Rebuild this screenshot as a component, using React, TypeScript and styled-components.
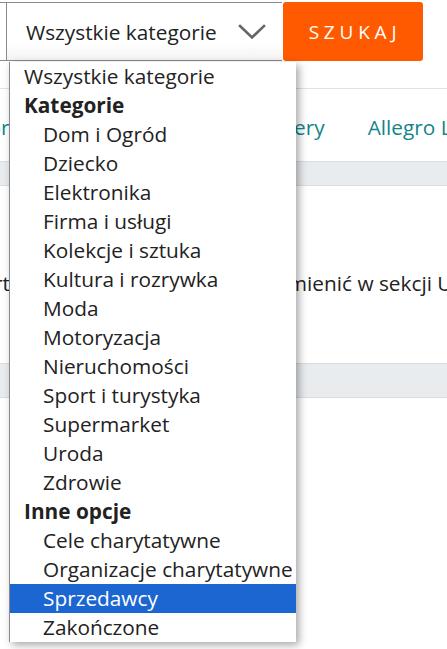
import React from "react";
import styled, { createGlobalStyle } from "styled-components";

const Global = createGlobalStyle`
  html, body { margin: 0; padding: 0; background: #fff; }
  body { font-family: "Open Sans", "Noto Sans", sans-serif; color: #222; overflow: hidden; }
`;

const Page = styled.div`
  position: relative;
  width: 447px;
  height: 649px;
  overflow: hidden;
`;

const Header = styled.div`
  display: flex;
  align-items: stretch;
  padding-top: 2px;
  height: 59px;
`;

const InputStub = styled.div`
  width: 6px;
  border-top: 1px solid #8a8a8a;
  border-bottom: 1px solid #8a8a8a;
`;

const SelectBox = styled.div`
  width: 276px;
  display: flex;
  align-items: center;
  justify-content: space-between;
  padding: 0 16px 0 19px;
  box-sizing: border-box;
  border: 1px solid #8a8a8a;
  border-right: none;
  background: linear-gradient(to bottom, #fff 70%, #f3f3f3 100%);
  font-size: 20.8px;
  color: #222;
`;

const SearchButton = styled.button`
  width: 140px;
  margin-left: 1px;
  border: none;
  border-radius: 3px;
  background: #ff5a00;
  color: #fff;
  font-family: "Open Sans", sans-serif;
  font-size: 19px;
  letter-spacing: 4.8px;
  padding: 0 0 0 4px;
`;

const NavArea = styled.div`
  margin-top: 27px;
  border-top: 1px solid #e2e2e2;
  height: 73px;
  padding-top: 3px;
  box-sizing: border-box;
  display: flex;
  align-items: center;
  white-space: nowrap;
  overflow: hidden;
`;

const NavLink = styled.span<{ $offset?: number }>`
  font-size: 20.8px;
  color: #12858a;
  margin-left: ${(p) => p.$offset ?? 0}px;
  flex: none;
`;

const Band = styled.div<{ $h: number }>`
  height: ${(p) => p.$h}px;
  background: #e9ecef;
  border-top: 1px solid #dcdcdc;
  border-bottom: 1px solid #dcdcdc;
  box-sizing: border-box;
`;

const Content = styled.div`
  height: 177px;
  display: flex;
  align-items: center;
  padding-top: 16px;
  box-sizing: border-box;
  white-space: nowrap;
  overflow: hidden;
`;

const Info = styled.p<{ $offset: number }>`
  margin: 0 0 0 ${(p) => p.$offset}px;
  font-size: 20.8px;
  color: #222;
  flex: none;
`;

const Dropdown = styled.ul`
  position: absolute;
  left: 9px;
  top: 62px;
  width: 287px;
  margin: 0;
  padding: 0;
  list-style: none;
  background: #fff;
  border-left: 1px solid #8a8a8a;
  box-sizing: border-box;
  box-shadow: 3px 3px 8px rgba(0, 0, 0, 0.35);
`;

const Row = styled.li<{ $kind: "option" | "group" | "top"; $selected?: boolean }>`
  height: 29px;
  line-height: 29px;
  font-size: 20.8px;
  white-space: nowrap;
  padding-left: ${(p) => (p.$kind === "option" ? 33 : 14)}px;
  font-weight: ${(p) => (p.$kind === "group" ? 700 : 400)};
  color: ${(p) => (p.$selected ? "#fff" : "#222")};
  background: ${(p) => (p.$selected ? "#1c66d1" : "transparent")};
`;

const Chevron = () => (
  <svg width="28" height="16" viewBox="0 0 28 16" fill="none">
    <path d="M2 2 L14 13.5 L26 2" stroke="#666" strokeWidth="2.6" strokeLinecap="square" />
  </svg>
);

type Item = { label: string; kind: "option" | "group" | "top"; selected?: boolean };

const items: Item[] = [
  { label: "Wszystkie kategorie", kind: "top" },
  { label: "Kategorie", kind: "group" },
  { label: "Dom i Ogród", kind: "option" },
  { label: "Dziecko", kind: "option" },
  { label: "Elektronika", kind: "option" },
  { label: "Firma i usługi", kind: "option" },
  { label: "Kolekcje i sztuka", kind: "option" },
  { label: "Kultura i rozrywka", kind: "option" },
  { label: "Moda", kind: "option" },
  { label: "Motoryzacja", kind: "option" },
  { label: "Nieruchomości", kind: "option" },
  { label: "Sport i turystyka", kind: "option" },
  { label: "Supermarket", kind: "option" },
  { label: "Uroda", kind: "option" },
  { label: "Zdrowie", kind: "option" },
  { label: "Inne opcje", kind: "group" },
  { label: "Cele charytatywne", kind: "option" },
  { label: "Organizacje charytatywne", kind: "option" },
  { label: "Sprzedawcy", kind: "option", selected: true },
  { label: "Zakończone", kind: "option" },
];

export default function App() {
  return (
    <Page>
      <Global />
      <Header>
        <InputStub />
        <SelectBox>
          <span>Wszystkie kategorie</span>
          <Chevron />
        </SelectBox>
        <SearchButton>SZUKAJ</SearchButton>
      </Header>
      <NavArea>
        <NavLink $offset={-42}>Kolor</NavLink>
        <NavLink $offset={210}>Bestsellery</NavLink>
        <NavLink $offset={43}>Allegro Lokalnie</NavLink>
      </NavArea>
      <Band $h={25} />
      <Content>
        <Info $offset={-133}>Kategorię startową jednak zawsze możesz zmienić w sekcji Ustawienia</Info>
      </Content>
      <Band $h={35} />
      <Dropdown>
        {items.map((it) => (
          <Row key={it.label} $kind={it.kind} $selected={it.selected}>
            {it.label}
          </Row>
        ))}
      </Dropdown>
    </Page>
  );
}
